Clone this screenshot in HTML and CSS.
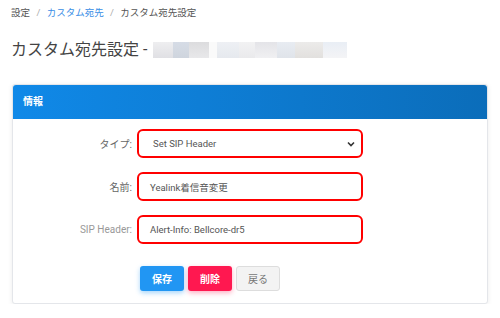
FILE: index.html
```html
<!DOCTYPE html>
<html lang="ja">
<head>
  <meta charset="UTF-8">
  <title>カスタム宛先設定</title>
  <link rel="stylesheet" href="styles.css">
</head>
<body>
  <div class="breadcrumb">
    <span>設定</span>
    <span class="sep">/</span>
    <a href="#">カスタム宛先</a>
    <span class="sep">/</span>
    <span>カスタム宛先設定</span>
  </div>

  <h2 class="title">カスタム宛先設定 - <span class="masked"><i class="m1"></i><i class="m2"></i><i class="m3"></i><i class="m4"></i><i class="m5"></i><i class="m6"></i><i class="m7"></i><i class="m8"></i><i class="m9"></i><i class="m10"></i></span></h2>

  <div class="card">
    <div class="card-header">情報</div>
    <div class="card-body">
      <label>タイプ:</label>
      <div class="field select">
        <span>Set SIP Header</span>
        <svg width="8" height="6" viewBox="0 0 8 6"><path d="M1 1.5 L4 4.5 L7 1.5" fill="none" stroke="#333" stroke-width="1.6"/></svg>
      </div>

      <label>名前:</label>
      <div class="field">Yealink着信音変更</div>

      <label class="light">SIP Header:</label>
      <div class="field">Alert-Info: Bellcore-dr5</div>

      <div class="buttons">
        <button class="btn save">保存</button>
        <button class="btn delete">削除</button>
        <button class="btn back">戻る</button>
      </div>
    </div>
  </div>
</body>
</html>
```

FILE: styles.css
```css
body {
  margin: 0;
  padding: 0 12px 0 11px;
  font-family: Roboto, "Noto Sans CJK JP", sans-serif;
  background: #fff;
  color: #555;
}
.breadcrumb {
  padding-top: 5px;
  height: 16px;
  line-height: 16px;
  font-size: 9.5px;
  color: #555;
}
.breadcrumb a {
  color: #3a8ee6;
  text-decoration: none;
}
.breadcrumb .sep {
  color: #aaa;
  margin: 0 4px;
}
.title {
  margin: 17px 0 0;
  height: 24px;
  line-height: 24px;
  font-size: 16px;
  font-weight: normal;
  color: #444;
  display: flex;
  align-items: center;
  white-space: pre;
}
.masked {
  display: inline-flex;
  height: 16px;
  margin-left: 2px;
}
.masked i {
  display: block;
  height: 16px;
}
.m1 { width: 20px; background: linear-gradient(#eeeef0, #e0e0e4); }
.m2 { width: 16px; background: linear-gradient(#d6dce6, #cfd5de); }
.m3 { width: 20px; background: linear-gradient(#dcdcde, #e8e8ea); }
.m4 { width: 8px; background: #fafafa; }
.m5 { width: 22px; background: linear-gradient(#eef0f4, #e6e9ee); }
.m6 { width: 16px; background: linear-gradient(#f2f2f3, #eaeaec); }
.m7 { width: 22px; background: linear-gradient(#e4e4e8, #f0f0f2); }
.m8 { width: 18px; background: linear-gradient(#e8ecf2, #e0e4ea); }
.m9 { width: 28px; background: linear-gradient(#ecebea, #e2e0de); }
.m10 { width: 24px; background: linear-gradient(#e9eef5, #f4f4f6); }
.card {
  margin-top: 22px;
  margin-left: 1px;
  border: 1px solid #e4e6ea;
  border-radius: 3px;
  box-shadow: 0 1px 5px rgba(0,0,0,0.08);
  background: #fff;
}
.card-header {
  height: 34px;
  line-height: 34px;
  padding-left: 10px;
  background: linear-gradient(to right, #1089e8, #0b6dba);
  color: #fff;
  font-size: 10px;
  font-weight: bold;
  border-radius: 3px 3px 0 0;
}
.card-body {
  display: grid;
  grid-template-columns: 119px 226px;
  column-gap: 5px;
  row-gap: 14px;
  align-items: center;
  padding: 10px 0 12px;
}
.card-body label {
  text-align: right;
  font-size: 10px;
  color: #666;
}
.card-body label.light {
  color: #999;
}
.field {
  box-sizing: border-box;
  height: 29px;
  border: 2px solid #f00;
  border-radius: 6px;
  padding: 0 11px;
  display: flex;
  align-items: center;
  font-size: 9.5px;
  color: #555;
}
.select {
  justify-content: space-between;
  padding: 0 6px 0 14px;
}
.buttons {
  grid-column: 2;
  display: flex;
  gap: 4px;
  margin-top: 8px;
  padding-left: 3px;
}
.btn {
  width: 44px;
  height: 25px;
  border: none;
  border-radius: 3px;
  font-family: "Noto Sans CJK JP", sans-serif;
  font-size: 10px;
  font-weight: bold;
  color: #fff;
  padding: 0;
}
.save {
  background: #2196f3;
  box-shadow: 0 2px 5px rgba(33,150,243,0.4);
}
.delete {
  background: #ff1850;
  box-shadow: 0 2px 5px rgba(255,24,80,0.35);
}
.back {
  background: #f3f3f3;
  border: 1px solid #ddd;
  color: #777;
  font-weight: normal;
}
```
